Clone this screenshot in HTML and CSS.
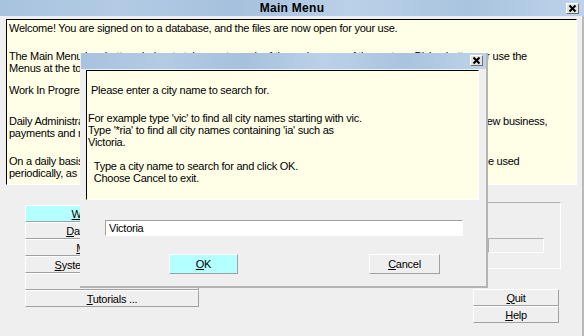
FILE: index.html
```html
<!DOCTYPE html>
<html lang="en">
<head>
    <meta charset="UTF-8">
    <title>Main Menu</title>
    <link rel="stylesheet" href="styles.css">
</head>
<body>
    <div class="window">
        <div class="titlebar">
            <span class="title">Main Menu</span>
            <span class="close">
                <svg width="13" height="11" viewBox="0 0 13 11"><path d="M3.5 2.5 L9.5 8.5 M9.5 2.5 L3.5 8.5" stroke="#000" stroke-width="2"/></svg>
            </span>
        </div>
        <div class="main-body">
            <!-- welcome text -->
            <div class="textbox">
                <p class="p1">Welcome! You are signed on to a database, and the files are now open for your use.</p>
                <p class="p2">The Main Menu has buttons below to take you to each of the main areas of the system. Pick a button, or use the<br>Menus at the top of the screen to open the same areas.</p>
                <p class="p3">Work In Progress shows the jobs that are currently open.</p>
                <p class="p4">Daily Administration is where you record the day to day work of the office, such as quotes, sales, jobs, new business,<br>payments and receipts.</p>
                <p class="p5">On a daily basis you will often use the first two buttons above, while the other buttons on the menu will be used<br>periodically, as required.</p>
            </div>

            <div class="controls">
                <div class="menu-buttons">
                    <button class="btn active"><u>W</u>ork In Progress</button>
                    <button class="btn"><u>D</u>aily Administration</button>
                    <button class="btn"><u>M</u>aintenance ...</button>
                    <button class="btn"><u>S</u>ystem Administration ...</button>
                    <button class="btn"><u>I</u>nquiries ...</button>
                    <button class="btn"><u>T</u>utorials ...</button>
                </div>
                <div class="side">
                    <div class="frame">
                        <div class="frame-field"></div>
                    </div>
                    <button class="btn side-btn quit"><u>Q</u>uit</button>
                    <button class="btn side-btn"><u>H</u>elp</button>
                </div>
            </div>
        </div>

        <!-- search dialog -->
        <div class="dialog">
            <div class="titlebar dialog-title">
                <span class="close">
                    <svg width="13" height="11" viewBox="0 0 13 11"><path d="M3.5 2.5 L9.5 8.5 M9.5 2.5 L3.5 8.5" stroke="#000" stroke-width="2"/></svg>
                </span>
            </div>
            <div class="textbox dialog-text">
                <p class="d1">Please enter a city name to search for.</p>
                <p class="d2">For example type 'vic' to find all city names starting with vic.<br>Type '*ria' to find all city names containing 'ia' such as<br>Victoria.</p>
                <p class="d3">&nbsp;Type a city name to search for and click OK.<br>&nbsp;Choose Cancel to exit.</p>
            </div>
            <input class="city" type="text" value="Victoria">
            <div class="dialog-buttons">
                <button class="btn active ok"><u>O</u>K</button>
                <button class="btn cancel"><u>C</u>ancel</button>
            </div>
        </div>
    </div>
</body>
</html>
```

FILE: styles.css
```css
body {
    margin: 0;
    font-family: "Liberation Sans", Arial, sans-serif;
    font-size: 11px;
    letter-spacing: -0.25px;
    color: #000;
}
.window {
    position: relative;
    width: 584px;
    height: 336px;
    background-color: #efefef;
    overflow: hidden;
}
.titlebar {
    height: 16px;
    display: flex;
    align-items: center;
    justify-content: center;
    position: relative;
    background: linear-gradient(to right, #a8c3de 0%, #b3cbe5 20%, #a6c1dd 40%, #bbd1e9 60%, #a9c4df 80%, #bdd3ea 100%);
}
.title {
    font-weight: bold;
    font-size: 12px;
    letter-spacing: 0.3px;
}
.close {
    position: absolute;
    right: 5px;
    top: 3px;
    width: 13px;
    height: 11px;
    background-color: #e4e4e4;
    border: 1px solid;
    border-color: #fff #707070 #707070 #fff;
    box-sizing: border-box;
    display: flex;
}
.close svg {
    margin: -1px;
}
.main-body {
    padding: 3px 5px 0 6px;
    height: 320px;
    border-right: 2px solid #b9b9b9;
}
.textbox {
    background-color: #ffffe8;
    border: 1px solid;
    border-color: #000 #fff #fff #000;
    height: 164px;
    padding: 0 2px;
    line-height: 12px;
    overflow: hidden;
}
.textbox p {
    margin: 0;
    white-space: nowrap;
}
.p1 { margin-top: 2px !important; }
.p2 { margin-top: 16px !important; }
.p3 { margin-top: 10px !important; }
.p4 { margin-top: 19px !important; }
.p5 { margin-top: 16px !important; }
.controls {
    display: flex;
    justify-content: space-between;
    align-items: flex-start;
    padding: 20px 16px 0 19px;
}
.menu-buttons {
    display: flex;
    flex-direction: column;
    width: 174px;
}
.btn {
    font-family: "Liberation Sans", Arial, sans-serif;
    font-size: 11px;
    letter-spacing: -0.25px;
    height: 17px;
    padding: 0;
    background-color: #efefef;
    border: 1px solid;
    border-color: #fff #a0a0a0 #a0a0a0 #fff;
    color: #000;
    line-height: 14px;
}
.btn.active {
    background-color: #b4ffff;
}
.side {
    display: flex;
    flex-direction: column;
    align-items: flex-start;
    width: 88px;
    margin-top: -3px;
}
.frame {
    margin-left: 14px;
    width: 74px;
    height: 67px;
    box-sizing: border-box;
    border: 1px solid;
    border-color: #b0b0b0 #fff #fff #b0b0b0;
}
.frame-field {
    margin-top: 35px;
    width: 56px;
    height: 15px;
    box-sizing: border-box;
    border: 1px solid;
    border-color: #b0b0b0 #fff #fff #b0b0b0;
}
.side-btn {
    width: 86px;
}
.quit {
    margin-top: 20px;
}
.dialog {
    position: absolute;
    left: 80px;
    top: 53px;
    width: 406px;
    height: 233px;
    background-color: #efefef;
    border-right: 2px solid #b4b4b4;
    border-bottom: 2px solid #b4b4b4;
}
.dialog-title {
    margin-left: 1px;
}
.dialog-title .close {
    right: 3px;
    top: 2px;
}
.dialog-text {
    margin: 1px 7px 0 6px;
    height: 128px;
    padding: 0 1px;
}
.d1 { margin-top: 13px !important; padding-left: 3px; }
.d2 { margin-top: 16px !important; }
.d3 { margin-top: 12px !important; padding-left: 3px; }
.city {
    display: block;
    margin: 20px 0 0 25px;
    width: 358px;
    height: 16px;
    box-sizing: border-box;
    padding: 0 3px;
    border: 1px solid;
    border-color: #a0a0a0 #fff #fff #a0a0a0;
    background-color: #fff;
    font-family: "Liberation Sans", Arial, sans-serif;
    font-size: 11px;
    letter-spacing: -0.25px;
    outline: none;
}
.dialog-buttons {
    display: flex;
    margin: 18px 0 0 89px;
}
.dialog-buttons .btn {
    height: 20px;
}
.ok {
    width: 69px;
}
.cancel {
    width: 71px;
    margin-left: 131px;
}
```
